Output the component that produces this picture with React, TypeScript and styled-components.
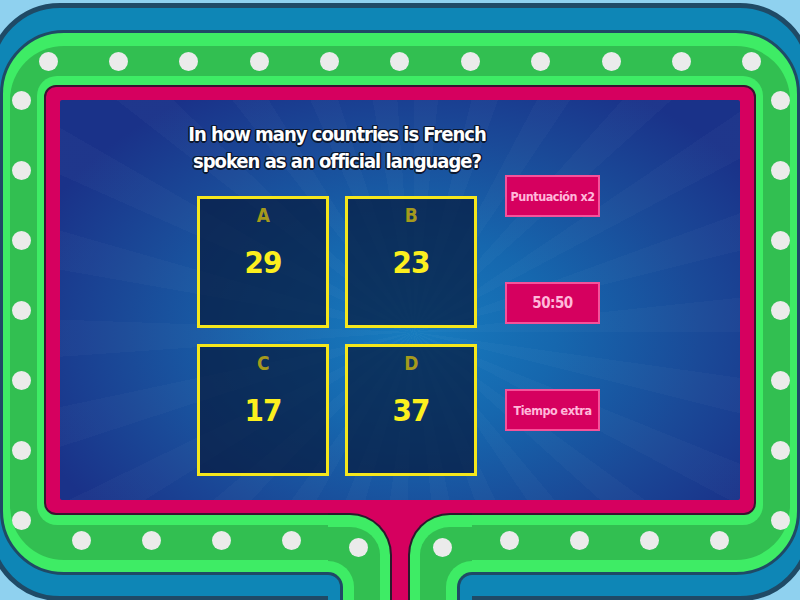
import React from 'react'
import styled, { createGlobalStyle } from 'styled-components'

const OUTLINE = '#1f4a66'
const OUTER_BLUE = '#0e86b6'
const LIGHT_GREEN = '#3eec65'
const DARK_GREEN = '#32bf51'
const PINK = '#d6005f'
const DOT = '#ebebeb'

const GlobalStyle = createGlobalStyle`
  html, body {
    margin: 0;
    padding: 0;
  }
  body {
    width: 800px;
    height: 600px;
    overflow: hidden;
    background: #8fd1ef;
    font-family: 'DejaVu Sans Condensed', 'Liberation Sans', sans-serif;
  }
`

const Page = styled.div`
  position: relative;
  width: 800px;
  height: 600px;
  padding-top: 3px;
  box-sizing: border-box;
  overflow: hidden;
`

const OuterFrame = styled.div`
  margin-left: -12px;
  width: 824px;
  height: 598px;
  box-sizing: border-box;
  border: 5px solid ${OUTLINE};
  border-radius: 72px;
  background: ${OUTER_BLUE};
  padding: 22px 7px 21px;
  display: flex;
`

const GreenFrame = styled.div`
  flex: 1;
  display: flex;
  border: 3px solid ${OUTLINE};
  border-radius: 64px;
  background: ${LIGHT_GREEN};
  padding: 13px 7px 12px;
`

const DarkBand = styled.div`
  flex: 1;
  display: grid;
  grid-template-columns: 27px minmax(0, 1fr) 27px;
  grid-template-rows: 30px minmax(0, 1fr) 35px;
  border-radius: 54px;
  background: ${DARK_GREEN};
`

const Dot = styled.span`
  display: block;
  flex: none;
  width: 19px;
  height: 19px;
  border-radius: 50%;
  background: ${DOT};
`

const TopDots = styled.div`
  grid-column: 1 / -1;
  display: flex;
  align-items: center;
  justify-content: space-between;
  padding: 0 28.5px;
`

const SideDots = styled.div<{ $side: 'left' | 'right' }>`
  display: flex;
  flex-direction: column;
  align-items: ${({ $side }) => ($side === 'left' ? 'flex-start' : 'flex-end')};
  gap: 51px;
  padding-top: 14.5px;
  padding-left: ${({ $side }) => ($side === 'left' ? '1.5px' : '0')};
  padding-right: ${({ $side }) => ($side === 'right' ? '0.5px' : '0')};
`

const BottomDots = styled.div`
  grid-column: 1 / -1;
  display: flex;
  align-items: center;
  justify-content: space-between;
  padding: 0 61.5px 5px;
`

const DotGroup = styled.div`
  display: flex;
  gap: 51px;
`

const InnerRim = styled.div`
  display: flex;
  min-height: 0;
  border-radius: 20px;
  background: ${LIGHT_GREEN};
  padding: 9px 7px 10px;
`

const PinkFrame = styled.div`
  flex: 1;
  display: flex;
  min-height: 0;
  border: 2px solid #3a1430;
  border-radius: 12px;
  background: ${PINK};
  padding: 13px 14px;
`

const Screen = styled.div`
  flex: 1;
  display: flex;
  align-items: flex-start;
  min-height: 0;
  overflow: hidden;
  padding: 21px 0 0 127px;
  border-radius: 2px;
  background:
    repeating-conic-gradient(from 0deg at 52% 58%, rgba(255, 255, 255, 0.025) 0deg 6deg, rgba(255, 255, 255, 0) 6deg 14deg),
    radial-gradient(ellipse 60% 70% at 52% 58%, #177cbf 0%, #1667ae 35%, #1a4a98 70%, #1a3289 100%);
`

const QuestionColumn = styled.div`
  width: 300px;
  flex: none;
  display: flex;
  flex-direction: column;
  align-items: center;
`

const Question = styled.div`
  color: #ffffff;
  font-weight: 700;
  font-size: 20px;
  line-height: 27px;
  letter-spacing: -1px;
  white-space: nowrap;
  text-align: center;
  text-shadow:
    1.5px 0 0 #0b1830, -1.5px 0 0 #0b1830, 0 1.5px 0 #0b1830, 0 -1.5px 0 #0b1830,
    1px 1px 0 #0b1830, -1px -1px 0 #0b1830, 1px -1px 0 #0b1830, -1px 1px 0 #0b1830;
`

const AnswerGrid = styled.div`
  margin-top: 21px;
  display: grid;
  grid-template-columns: repeat(2, 132px);
  gap: 16px;
`

const AnswerBox = styled.div`
  height: 132px;
  box-sizing: border-box;
  border: 3px solid #f5e71c;
  background: rgba(7, 27, 62, 0.72);
  display: flex;
  flex-direction: column;
  align-items: center;
  padding-top: 7px;
`

const AnswerLetter = styled.span`
  color: #a59a1c;
  font-weight: 700;
  font-size: 19px;
  line-height: 18px;
  letter-spacing: -0.5px;
`

const AnswerValue = styled.span`
  margin-top: 20px;
  color: #fcef1e;
  font-weight: 700;
  font-size: 31px;
  line-height: 36px;
  letter-spacing: -1px;
`

const PowerColumn = styled.div`
  margin: 54px 0 0 18px;
  width: 95px;
  flex: none;
  display: flex;
  flex-direction: column;
  gap: 65px;
`

const PowerButton = styled.div<{ $big?: boolean }>`
  height: 42px;
  box-sizing: border-box;
  border: 2px solid #f5529a;
  background: ${PINK};
  color: #ffb8da;
  font-weight: 700;
  font-size: ${({ $big }) => ($big ? '15px' : '12.5px')};
  letter-spacing: -0.5px;
  display: flex;
  align-items: center;
  justify-content: center;
  white-space: nowrap;
`

/* the stand under the screen: pink stem between two green arms */
const Stem = styled.div`
  position: absolute;
  left: 328px;
  top: 513px;
  width: 144px;
  height: 90px;
  display: flex;
  justify-content: space-between;
  background: ${PINK};
`

const Arm = styled.div<{ $side: 'left' | 'right' }>`
  width: 64px;
  box-sizing: border-box;
  background: #2a1a2c;
  padding: ${({ $side }) => ($side === 'left' ? '2px 2px 0 0' : '2px 0 0 2px')};
  ${({ $side }) => ($side === 'left' ? 'border-top-right-radius: 42px;' : 'border-top-left-radius: 42px;')}
  overflow: hidden;
`

const ArmCore = styled.div<{ $side: 'left' | 'right' }>`
  position: relative;
  height: 100%;
  box-sizing: border-box;
  overflow: hidden;
  background: ${DARK_GREEN};
  border-top: 12px solid ${LIGHT_GREEN};
  ${({ $side }) =>
    $side === 'left'
      ? `border-right: 10px solid ${LIGHT_GREEN}; border-top-right-radius: 40px; padding: 10.5px 0 0 20.5px;`
      : `border-left: 10px solid ${LIGHT_GREEN}; border-top-left-radius: 40px; padding: 10.5px 0 0 12.5px;`}
`

const Pocket = styled.div<{ $side: 'left' | 'right' }>`
  position: absolute;
  top: 48px;
  ${({ $side }) => ($side === 'left' ? 'left: 0; border-top-right-radius: 12px;' : 'right: 0; border-top-left-radius: 12px;')}
  width: 12px;
  height: 60px;
  background: ${OUTER_BLUE};
  box-shadow: 0 0 0 3px ${OUTLINE}, 0 0 0 14px ${LIGHT_GREEN};
`

const answers = [
  { letter: 'A', value: '29' },
  { letter: 'B', value: '23' },
  { letter: 'C', value: '17' },
  { letter: 'D', value: '37' },
]

const dots = (n: number) => Array.from({ length: n }, (_, i) => <Dot key={i} />)

export default function App() {
  return (
    <>
      <GlobalStyle />
      <Page>
        <OuterFrame>
          <GreenFrame>
            <DarkBand>
              <TopDots>{dots(11)}</TopDots>
              <SideDots $side="left">{dots(7)}</SideDots>
              <InnerRim>
                <PinkFrame>
                  <Screen>
                    <QuestionColumn>
                      <Question>
                        In how many countries is French
                        <br />
                        spoken as an official language?
                      </Question>
                      <AnswerGrid>
                        {answers.map((a) => (
                          <AnswerBox key={a.letter}>
                            <AnswerLetter>{a.letter}</AnswerLetter>
                            <AnswerValue>{a.value}</AnswerValue>
                          </AnswerBox>
                        ))}
                      </AnswerGrid>
                    </QuestionColumn>
                    <PowerColumn>
                      <PowerButton>Puntuación x2</PowerButton>
                      <PowerButton $big>50:50</PowerButton>
                      <PowerButton>Tiempo extra</PowerButton>
                    </PowerColumn>
                  </Screen>
                </PinkFrame>
              </InnerRim>
              <SideDots $side="right">{dots(7)}</SideDots>
              <BottomDots>
                <DotGroup>{dots(4)}</DotGroup>
                <DotGroup>{dots(4)}</DotGroup>
              </BottomDots>
            </DarkBand>
          </GreenFrame>
        </OuterFrame>
        <Stem>
          <Arm $side="left">
            <ArmCore $side="left">
              <Pocket $side="left" />
              <Dot />
            </ArmCore>
          </Arm>
          <Arm $side="right">
            <ArmCore $side="right">
              <Pocket $side="right" />
              <Dot />
            </ArmCore>
          </Arm>
        </Stem>
      </Page>
    </>
  )
}
